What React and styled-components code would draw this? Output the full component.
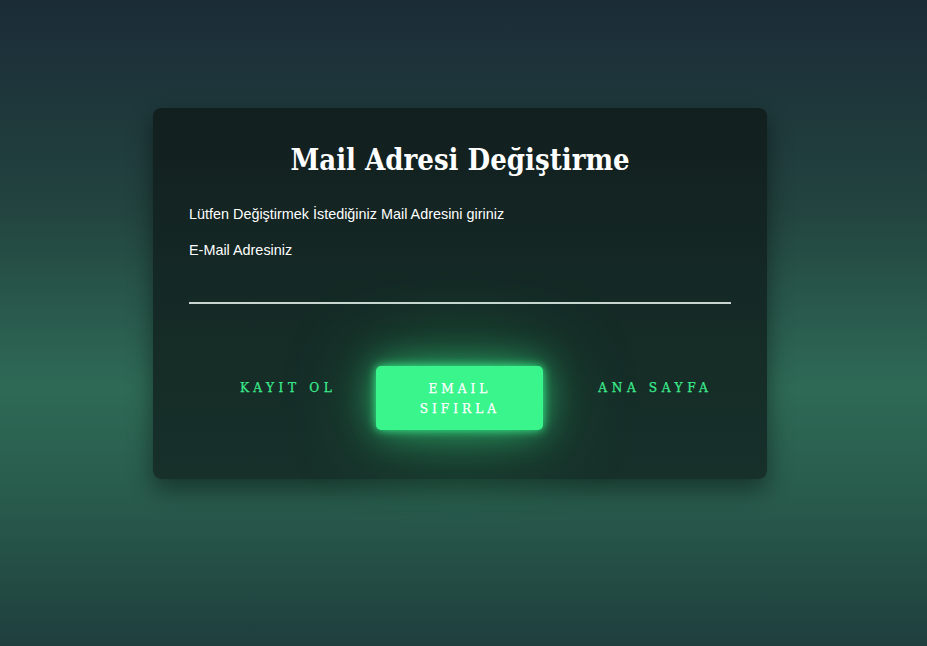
import React, { useState } from 'react'
import styled, { createGlobalStyle } from 'styled-components'

const GlobalStyle = createGlobalStyle`
    html, body {
        margin: 0;
        padding: 0;
        height: 100%;
    }

    body {
        background: linear-gradient(180deg, #1b2c37 0%, #22433f 32%, #2e6a56 60%, #285a4b 78%, #1f3f3e 100%);
        font-family: 'Liberation Sans', Arial, sans-serif;
    }
`

const Page = styled.div`
    min-height: 646px;
    display: flex;
    justify-content: center;
    align-items: flex-start;
    padding: 108px 7px 0 0;
    box-sizing: border-box;
`

const Card = styled.div`
    width: 614px;
    box-sizing: border-box;
    padding: 28px 36px 49px;
    border-radius: 8px;
    background: linear-gradient(180deg, #121f1f 0%, #152b26 60%, #17302a 100%);
    box-shadow: 0 10px 25px rgba(0, 0, 0, 0.45);
    color: #fff;
`

const Title = styled.h2`
    margin: 0 0 22px;
    text-align: center;
    font-family: 'DejaVu Serif Condensed', 'DejaVu Serif', serif;
    font-stretch: condensed;
    font-weight: bold;
    font-size: 29px;
    line-height: 48px;
    color: #fff;
`

const Text = styled.p`
    margin: 0 0 19px;
    font-size: 14.4px;
    line-height: 17px;
`

const Field = styled.div`
    margin-top: 29px;
    border-bottom: 2px solid #c9d6d0;
    height: 14px;

    input {
        width: 100%;
        border: none;
        background: transparent;
        outline: none;
        color: #fff;
        font-size: 15px;
        padding: 0;
    }
`

const Actions = styled.div`
    display: flex;
    align-items: center;
    margin-top: 62px;
    padding-left: 51px;
    height: 64px;
`

const Link = styled.a`
    font-family: 'DejaVu Serif Condensed', 'DejaVu Serif', serif;
    font-stretch: condensed;
    font-size: 13.5px;
    letter-spacing: 4.6px;
    color: #3cec8d;
    -webkit-text-stroke: 0.25px #3cec8d;
    text-decoration: none;
    margin-top: -22px;
    margin-left: ${(p) => p.$gap}px;
    cursor: pointer;
`

const Glow = styled.button`
    width: 167px;
    height: 64px;
    margin-left: ${(p) => p.$gap}px;
    border: none;
    border-radius: 5px;
    background: #39f58c;
    color: #fff;
    -webkit-text-stroke: 0.25px #fff;
    font-family: 'DejaVu Serif Condensed', 'DejaVu Serif', serif;
    font-stretch: condensed;
    font-size: 13.5px;
    line-height: 20px;
    letter-spacing: 4px;
    padding: 0 20px;
    box-shadow: 0 0 10px rgba(57, 245, 140, 0.95), 0 0 36px rgba(57, 245, 140, 0.6), 0 0 90px rgba(57, 245, 140, 0.4);
    cursor: pointer;
`

const App = () => {
    const [mail, setMail] = useState('')

    return (
        <Page>
            <GlobalStyle />
            <Card>
                <Title>Mail Adresi Değiştirme</Title>
                <Text>Lütfen Değiştirmek İstediğiniz Mail Adresini giriniz</Text>
                <Text>E-Mail Adresiniz</Text>
                <Field>
                    <input type='email' value={mail} onChange={(e) => setMail(e.target.value)} />
                </Field>
                <Actions>
                    <Link $gap={0}>KAYIT OL</Link>
                    <Glow $gap={40}>EMAIL SIFIRLA</Glow>
                    <Link $gap={55}>ANA SAYFA</Link>
                </Actions>
            </Card>
        </Page>
    )
}

export default App
